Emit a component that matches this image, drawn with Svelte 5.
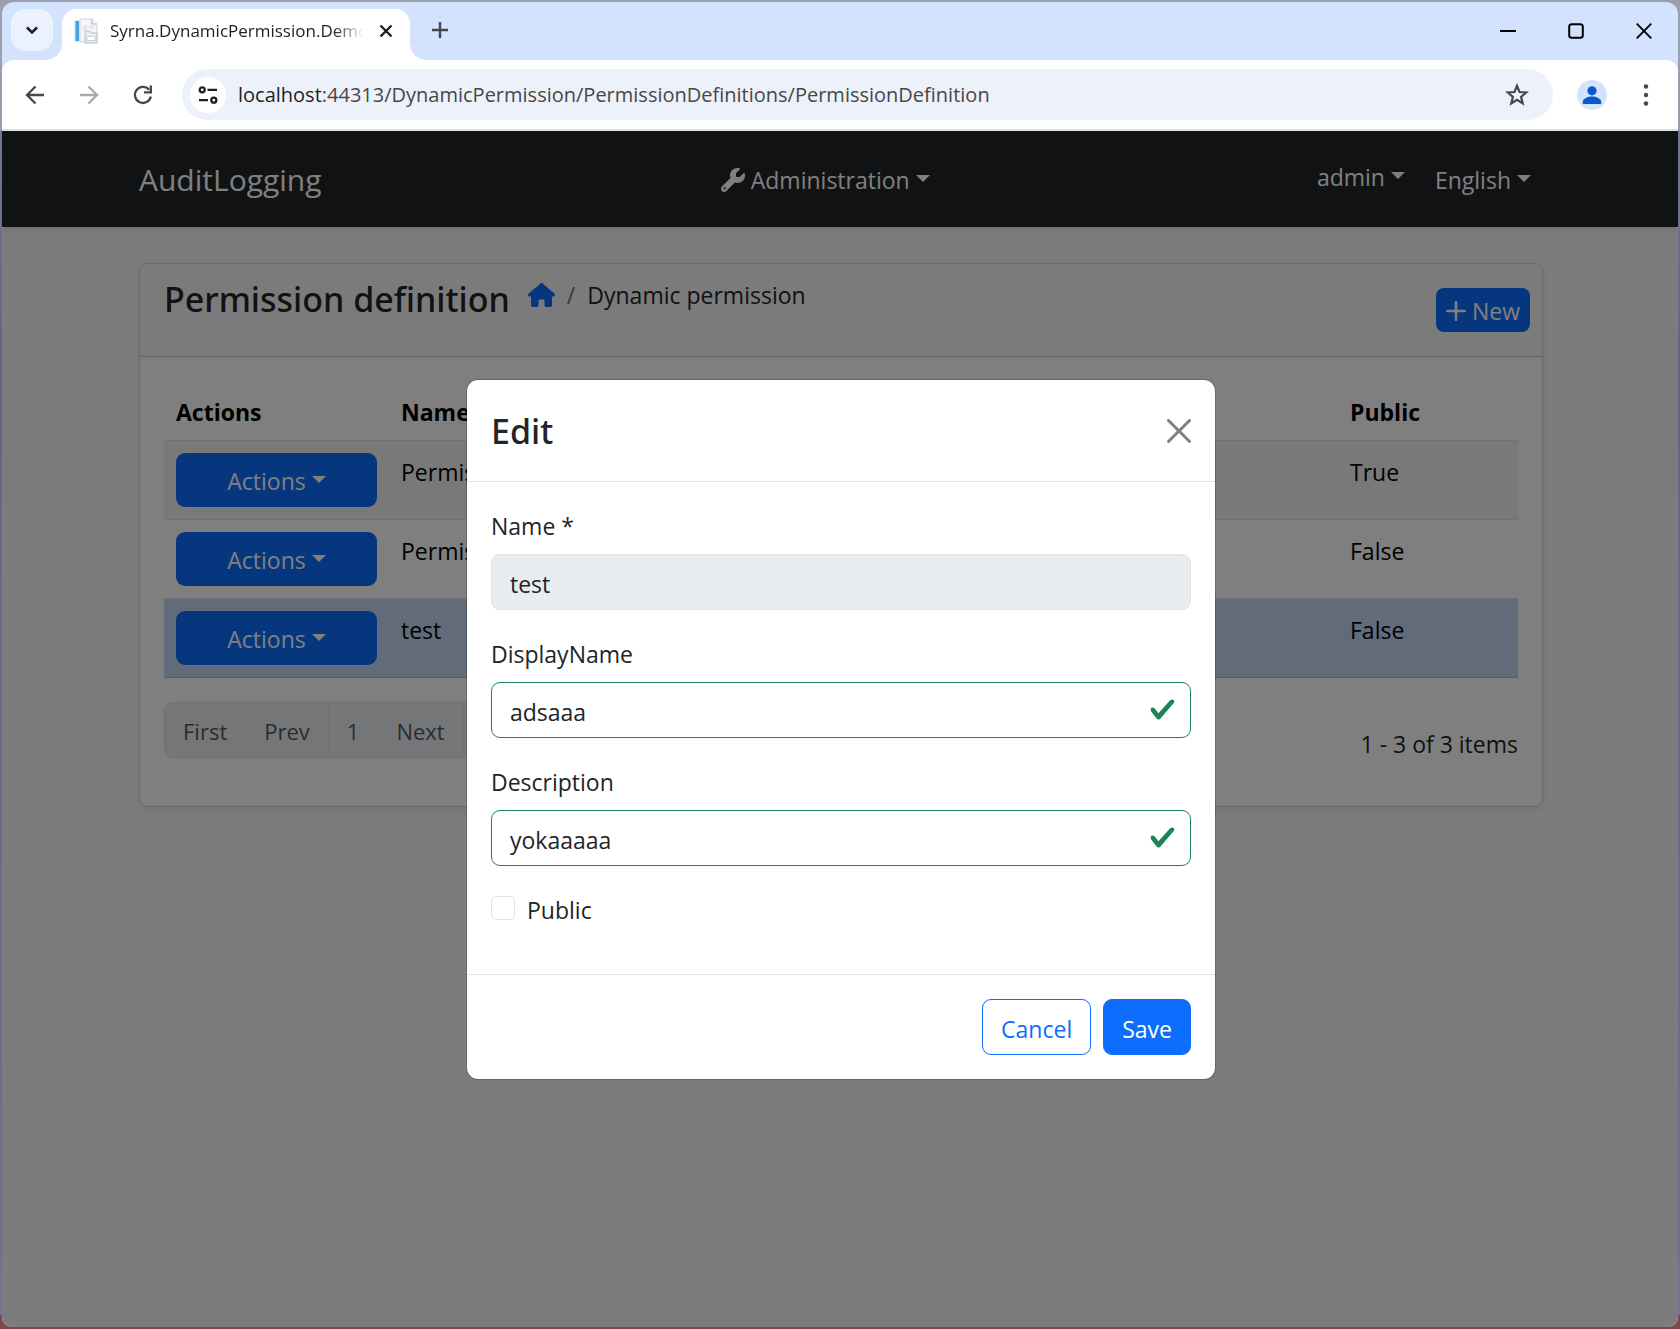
<script lang="ts">
  const rows = [
    { name: 'PermissionManagement', isPublic: 'True', selected: false },
    { name: 'PermissionDefinition', isPublic: 'False', selected: false },
    { name: 'test', isPublic: 'False', selected: true }
  ];
  const pages = ['First', 'Prev', '1', 'Next', 'Last'];

  let displayName = $state('adsaaa');
  let description = $state('yokaaaaa');
  let isPublic = $state(false);
</script>

{#snippet check()}
  <svg class="valid" viewBox="0 0 8 8" aria-hidden="true">
    <path fill="#198754" d="M2.3 6.73.6 4.53c-.4-1.04.46-1.4 1.1-.8l1.1 1.4 3.4-3.8c.6-.63 1.6-.27 1.2.7l-4 4.6c-.43.5-.8.4-1.1.1z" />
  </svg>
{/snippet}

<div class="desktop">
  <div class="window">
    <header class="tabstrip">
      <button class="tabsearch" aria-label="Search tabs">
        <svg width="14" height="9" viewBox="0 0 14 9"><path d="M2 1.5l5 5 5-5" fill="none" stroke="#1f1f1f" stroke-width="2.6" /></svg>
      </button>
      <div class="tab">
        <svg class="favicon" width="24" height="26" viewBox="0 0 24 26">
          <path d="M0 2h6v22H0z" fill="#e4e9ee" />
          <path d="M1.500 3h3.500v20H1.500z" fill="#4aa0d8" />
          <path d="M6 1h12l5 5v18H6z" fill="#f4f5f7" stroke="#d3d6db" />
          <path d="M18 1v5h5" fill="#fff" stroke="#a9afb8" />
          <path d="M8.500 7.500h5v5h-5zM15 7.500h5v3h-5z" fill="#e2e6eb" />
          <path d="M11 13h5l1.500 2H23v10H11z" fill="#e9ecf0" stroke="#b8c0ca" />
          <path d="M13 18.500h8v4h-8z" fill="#fff" stroke="#c8cfd8" />
        </svg>
        <span class="tabtitle">Syrna.DynamicPermission.Demo</span>
        <button class="tabclose" aria-label="Close tab">
          <svg width="14" height="14" viewBox="0 0 14 14"><path d="M1.500 1.500l11 11M12.500 1.500l-11 11" stroke="#1f1f1f" stroke-width="2.400" /></svg>
        </button>
      </div>
      <button class="newtab" aria-label="New tab">
        <svg width="16" height="16" viewBox="0 0 16 16"><path d="M8 0v16M0 8h16" stroke="#444746" stroke-width="2.400" /></svg>
      </button>
      <div class="controls">
        <button aria-label="Minimize"><svg width="16" height="16" viewBox="0 0 16 16"><path d="M0 8h16" stroke="#000" stroke-width="2" /></svg></button>
        <button aria-label="Maximize"><svg width="16" height="16" viewBox="0 0 16 16"><rect x="1.200" y="1.200" width="13.600" height="13.600" rx="2.500" fill="none" stroke="#000" stroke-width="2" /></svg></button>
        <button aria-label="Close"><svg width="16" height="16" viewBox="0 0 16 16"><path d="M.7.700l14.600 14.600M15.300.700L.700 15.300" stroke="#000" stroke-width="1.900" /></svg></button>
      </div>
    </header>

    <div class="toolbar">
      <div class="navbuttons">
        <button aria-label="Back"><svg width="20" height="20" viewBox="0 0 20 20"><path d="M19 10H2.500M10.500 1.500L2 10l8.500 8.500" fill="none" stroke="#474747" stroke-width="2.300" /></svg></button>
        <button aria-label="Forward"><svg width="20" height="20" viewBox="0 0 20 20"><path d="M1 10h16.500M9.500 1.500L18 10l-8.500 8.500" fill="none" stroke="#aaaaaa" stroke-width="2.300" /></svg></button>
        <button aria-label="Reload"><svg width="20" height="20" viewBox="0 0 20 20"><path d="M17.800 11.500A8 8 0 1 1 16 4.700" fill="none" stroke="#474747" stroke-width="2.300" /><path d="M19 .5v8h-8v-2.300h5.700V.5z" fill="#474747" /></svg></button>
      </div>
      <div class="omnibox">
        <button class="siteinfo" aria-label="Site information">
          <svg width="20" height="18" viewBox="0 0 20 18" fill="none" stroke="#1f1f1f" stroke-width="2.300"><circle cx="4.200" cy="3.800" r="2.500" /><path d="M9.500 3.800H19M1 14.200h9" /><circle cx="15.800" cy="14.200" r="2.500" /></svg>
        </button>
        <div class="url"><span>localhost</span>:44313/DynamicPermission/PermissionDefinitions/PermissionDefinition</div>
        <button class="star" aria-label="Bookmark this tab">
          <svg width="24" height="24" viewBox="0 0 24 24"><path d="M12 2.800l2.500 6.200 6.700.500-5.100 4.300 1.600 6.600-5.700-3.600-5.700 3.600 1.600-6.600-5.100-4.300 6.700-.500z" fill="none" stroke="#474747" stroke-width="2.200" /></svg>
        </button>
      </div>
      <button class="profile" aria-label="Profile">
        <svg width="30" height="30" viewBox="0 0 30 30"><circle cx="15" cy="15" r="15" fill="#d3e3fd" /><circle cx="15" cy="10.800" r="4.600" fill="#0b57d0" /><path d="M5.800 24v-2.200c0-3.300 5-5.300 9.200-5.300s9.200 2 9.200 5.300V24z" fill="#0b57d0" /></svg>
      </button>
      <button class="menu" aria-label="Menu">
        <svg width="6" height="22" viewBox="0 0 6 22" fill="#474747"><circle cx="3" cy="2.500" r="2.200" /><circle cx="3" cy="11" r="2.200" /><circle cx="3" cy="19.500" r="2.200" /></svg>
      </button>
    </div>

    <div class="page">
      <nav class="navbar">
        <div class="container navrow">
          <a class="brand" href="#home">AuditLogging</a>
          <button class="navlink">
            <svg width="24" height="24" viewBox="0 0 512 512" fill="currentColor"><path d="M352 320c88.400 0 160-71.600 160-160c0-15.300-2.200-30.100-6.200-44.200c-3.100-10.800-16.400-13.200-24.300-5.300l-76.800 76.800c-3 3-7.100 4.700-11.300 4.700L336 192c-8.800 0-16-7.200-16-16l0-57.400c0-4.200 1.700-8.300 4.700-11.300l76.800-76.800c7.900-7.900 5.400-21.200-5.300-24.300C382.100 2.200 367.300 0 352 0C263.600 0 192 71.600 192 160c0 19.100 3.400 37.500 9.500 54.500L19.900 396.100C7.200 408.800 0 426.100 0 444.100C0 481.600 30.400 512 67.900 512c18 0 35.300-7.200 48-19.900L297.500 310.500c17 6.200 35.400 9.500 54.500 9.500zM80 408a24 24 0 1 1 0 48 24 24 0 1 1 0-48z" /></svg>
            <span class="drop">Administration</span>
          </button>
          <div class="navright">
            <button class="navlink user"><span class="drop">admin</span></button>
            <button class="navlink"><span class="drop">English</span></button>
          </div>
        </div>
      </nav>

      <main class="container">
        <section class="card">
          <header class="cardhead">
            <h2>Permission definition</h2>
            <div class="crumbs">
              <a href="#home" aria-label="Home"><svg width="27" height="24" viewBox="0 0 576 512" fill="#0d6efd"><path d="M575.800 255.500c0 18-15 32.100-32 32.100l-32 0 .7 160.200c0 2.700-.2 5.400-.5 8.100l0 16.200c0 22.100-17.900 40-40 40l-16 0c-1.100 0-2.200 0-3.300-.1c-1.400 .1-2.800 .1-4.200 .1L416 512l-24 0c-22.100 0-40-17.900-40-40l0-24 0-64c0-17.700-14.300-32-32-32l-64 0c-17.700 0-32 14.300-32 32l0 64 0 24c0 22.100-17.900 40-40 40l-24 0-31.900 0c-1.500 0-3-.1-4.500-.2c-1.200 .1-2.400 .2-3.600 .2l-16 0c-22.100 0-40-17.900-40-40l0-112c0-.9 0-1.900 .1-2.800l0-69.700-32 0c-18 0-32-14-32-32.100c0-9 3-17 10-24L266.400 8c7-7 15-8 22-8s15 2 21 7L564.800 231.500c8 7 12 15 11 24z" /></svg></a>
              <span class="slash">/</span>
              <span>Dynamic permission</span>
            </div>
            <button class="new">
              <svg width="20" height="20" viewBox="0 0 20 20"><path d="M10 1.200v17.600M1.200 10h17.600" stroke="#fff" stroke-width="2.600" stroke-linecap="round" /></svg>
              New
            </button>
          </header>
          <div class="cardbody">
            <table>
              <thead>
                <tr><th class="c-act">Actions</th><th>Name</th><th class="c-pub">Public</th></tr>
              </thead>
              <tbody>
                {#each rows as row}
                  <tr class:selected={row.selected}>
                    <td><button class="actions"><span class="drop">Actions</span></button></td>
                    <td>{row.name}</td>
                    <td>{row.isPublic}</td>
                  </tr>
                {/each}
              </tbody>
            </table>
            <div class="tablefoot">
              <div class="pagination">
                {#each pages as p}<button>{p}</button>{/each}
              </div>
              <div class="info">1 - 3 of 3 items</div>
            </div>
          </div>
        </section>
      </main>

      <div class="backdrop">
        <form class="modal" aria-label="Edit" onsubmit={(e) => e.preventDefault()}>
          <header class="modalhead">
            <h2>Edit</h2>
            <button type="button" class="close" aria-label="Close">
              <svg width="24" height="24" viewBox="0 0 16 16"><path d="M.293.293a1 1 0 0 1 1.414 0L8 6.586 14.293.293a1 1 0 1 1 1.414 1.414L9.414 8l6.293 6.293a1 1 0 0 1-1.414 1.414L8 9.414l-6.293 6.293a1 1 0 0 1-1.414-1.414L6.586 8 .293 1.707a1 1 0 0 1 0-1.414z" fill="#808080" /></svg>
            </button>
          </header>
          <div class="modalbody">
            <div class="field">
              <label for="name">Name *</label>
              <input id="name" type="text" value="test" readonly />
            </div>
            <div class="field">
              <label for="display">DisplayName</label>
              <div class="control"><input id="display" class="ok" type="text" bind:value={displayName} />{@render check()}</div>
            </div>
            <div class="field">
              <label for="description">Description</label>
              <div class="control"><input id="description" class="ok" type="text" bind:value={description} />{@render check()}</div>
            </div>
            <div class="checkrow">
              <input id="public" type="checkbox" bind:checked={isPublic} />
              <label for="public">Public</label>
            </div>
          </div>
          <footer class="modalfoot">
            <button type="button" class="cancel">Cancel</button>
            <button type="submit" class="save">Save</button>
          </footer>
        </form>
      </div>
    </div>
  </div>
</div>

<style>
  :global(body) { margin: 0; }
  * { box-sizing: border-box; }
  .desktop {
    min-height: 100vh;
    display: flex;
    padding: 2px;
    background: linear-gradient(#9a9fae 0, #9a9fae 130px, #6f7893 131px, #5f6987 350px, #6b7490 1315px, #7b4a48 1316px);
    font-family: "Open Sans", "Noto Sans", sans-serif;
    font-size: 23px;
    line-height: 36px;
    color: #212529;
  }
  button {
    font: inherit;
    color: inherit;
    border: 0;
    padding: 0;
    background: none;
    display: flex;
    align-items: center;
    justify-content: center;
  }
  a { color: inherit; text-decoration: none; }
  svg { display: block; flex: none; }
  h2 { margin: 0; font-family: "Noto Sans", "Open Sans", sans-serif; font-size: 34px; font-weight: 500; line-height: 46px; }

  .window {
    flex: 1;
    display: flex;
    flex-direction: column;
    border-radius: 12px 12px 10px 10px;
    overflow: hidden;
    background: #d3e3fd;
  }
  .tabstrip { display: flex; height: 58px; padding: 7px 0 0 9px; }
  .tabsearch { width: 42px; height: 42px; border-radius: 14px; background: #ebf1fd; }
  .tab {
    position: relative;
    display: flex;
    align-items: center;
    width: 348px;
    margin-left: 9px;
    padding: 0 14px 8px 12px;
    border-radius: 15px 15px 0 0;
    background: #fff;
  }
  .tab::before, .tab::after {
    content: '';
    position: absolute;
    bottom: 0;
    width: 15px;
    height: 15px;
  }
  .tab::before { right: 100%; background: radial-gradient(circle at 0 0, transparent 14px, #fff 15px); }
  .tab::after { left: 100%; background: radial-gradient(circle at 100% 0, transparent 14px, #fff 15px); }
  .tabtitle {
    flex: 1;
    min-width: 0;
    margin: 0 12px;
    overflow: hidden;
    white-space: nowrap;
    font-size: 17px;
    line-height: 28px;
    color: #1f1f1f;
    -webkit-mask-image: linear-gradient(90deg, #000 88%, transparent);
    mask-image: linear-gradient(90deg, #000 88%, transparent);
  }
  .tabclose { width: 20px; height: 24px; }
  .newtab { width: 42px; height: 42px; margin-left: 9px; }
  .controls { display: flex; margin-left: auto; }
  .controls button { width: 68px; height: 44px; }

  .toolbar {
    display: flex;
    align-items: center;
    height: 71px;
    padding: 0 22px 0 6px;
    border-bottom: 2px solid #dfe1e0;
    border-radius: 12px 12px 0 0;
    background: #fff;
  }
  .navbuttons { display: flex; }
  .navbuttons button { width: 54px; height: 50px; }
  .omnibox {
    flex: 1;
    min-width: 0;
    display: flex;
    align-items: center;
    height: 51px;
    margin-left: 12px;
    padding: 0 24px 0 8px;
    border-radius: 26px;
    background: #ecf1fa;
  }
  .siteinfo { width: 36px; height: 36px; border-radius: 50%; background: #fff; }
  .url {
    flex: 1;
    min-width: 0;
    margin-left: 12px;
    overflow: hidden;
    white-space: nowrap;
    font-size: 20px;
    color: #474747;
  }
  .url span { color: #1f1f1f; }
  .profile { margin-left: 24px; }
  .menu { width: 20px; margin-left: 29px; }

  .page { position: relative; flex: 1; background: #f8f8f8; }
  .container { width: 100%; max-width: 1440px; margin: 0 auto; padding: 0 17px 0 19px; }
  .navbar { background: #212529; box-shadow: 0 3px 6px rgba(0, 0, 0, 0.08); color: #fff; padding: 19px 0 17px; }
  .navrow { display: flex; justify-content: space-between; align-items: center; }
  .brand { margin-right: 24px; font-size: 30px; line-height: 44px; }
  .navlink { gap: 6px; padding: 12px; }
  .navright { display: flex; align-items: flex-start; gap: 6px; }
  .user { line-height: 30px; }
  .drop { display: flex; align-items: center; }
  .drop::after {
    content: '';
    margin: 0 0 4px 6px;
    border: 7px solid transparent;
    border-top-color: currentColor;
    border-bottom: 0;
  }

  .card {
    margin-top: 36px;
    border: 1px solid #d3d4d5;
    border-radius: 9px;
    background: #fff;
    box-shadow: 0 3px 6px rgba(0, 0, 0, 0.075);
  }
  .cardhead {
    display: flex;
    height: 93px;
    padding: 12px 12px 12px 24px;
    border-bottom: 1px solid #c8c8c8;
    border-radius: 8px 8px 0 0;
    background: #f7f7f7;
  }
  .crumbs { display: flex; align-items: center; height: 38px; margin-left: 18px; gap: 12px; }
  .slash { color: #6c757d; }
  .new {
    gap: 6px;
    height: 44px;
    margin: 12px 0 0 auto;
    padding: 2px 10px 0;
    border-radius: 8px;
    background: #0d6efd;
    color: #fff;
  }
  .cardbody { padding: 24px 24px 44px; }
  table { width: 100%; border-collapse: collapse; table-layout: fixed; color: #000; line-height: 38px; }
  th { padding: 12px 12px 9px; text-align: left; font-weight: 700; }
  .c-act { width: 225px; }
  .c-pub { width: 180px; }
  tr { border-bottom: 1px solid #dee2e6; }
  td { padding: 12px; vertical-align: top; }
  tbody tr:nth-child(odd) { background: #f2f2f2; }
  tbody tr.selected { background: #c4d6f2; border-bottom-color: #a9bbd8; }
  .actions { width: 100%; height: 54px; padding-top: 2px; border-radius: 9px; background: #0d6efd; color: #fff; }
  .tablefoot { display: flex; justify-content: space-between; align-items: flex-start; margin-top: 24px; }
  .info { margin-top: 24px; }
  .pagination {
    display: flex;
    border: 1px solid #dee2e6;
    border-radius: 9px;
    background: #e9ecef;
    overflow: hidden;
    font-size: 22px;
    color: rgba(33, 37, 41, 0.75);
  }
  .pagination button { height: 54px; padding: 2px 18px 0; border-left: 1px solid #dee2e6; }
  .pagination button:first-child { border-left: 0; }

  .backdrop {
    position: absolute;
    inset: 0;
    display: flex;
    align-items: center;
    justify-content: center;
    padding-left: 2px;
    background: rgba(0, 0, 0, 0.5);
  }
  .modal {
    width: 750px;
    max-width: 100%;
    border: 1px solid rgba(0, 0, 0, 0.175);
    border-radius: 12px;
    background: #fff;
    background-clip: padding-box;
  }
  .modalhead {
    display: flex;
    align-items: center;
    justify-content: space-between;
    padding: 28px 24px 27px;
    border-bottom: 1px solid #dee2e6;
  }
  .modalbody { padding: 24px; display: flex; flex-direction: column; gap: 24px; }
  label { display: block; line-height: 40px; }
  .field label { margin-bottom: 8px; }
  .control { position: relative; }
  input[type='text'] {
    display: block;
    width: 100%;
    height: 56px;
    padding: 4px 18px 0;
    border: 1px solid #dee2e6;
    border-radius: 9px;
    font: inherit;
    color: #212529;
    background: #fff;
    outline: 0;
  }
  input[readonly] { background: #e8ecef; }
  input.ok { border-color: #198754; }
  .valid { position: absolute; right: 15px; top: 14px; width: 27px; height: 27px; }
  .checkrow { display: flex; align-items: flex-start; gap: 12px; padding-bottom: 20px; }
  input[type='checkbox'] {
    appearance: none;
    width: 24px;
    height: 24px;
    margin: 6px 0 0;
    border: 1px solid #dee2e6;
    border-radius: 6px;
    background: #fff;
  }
  .modalfoot {
    display: flex;
    justify-content: flex-end;
    gap: 12px;
    padding: 24px;
    border-top: 1px solid #dee2e6;
  }
  .modalfoot button { height: 56px; padding: 4px 18px 0; border: 1px solid #0d6efd; border-radius: 9px; color: #0d6efd; background: #fff; }
  .modalfoot .save { background: #0d6efd; color: #fff; }
</style>
